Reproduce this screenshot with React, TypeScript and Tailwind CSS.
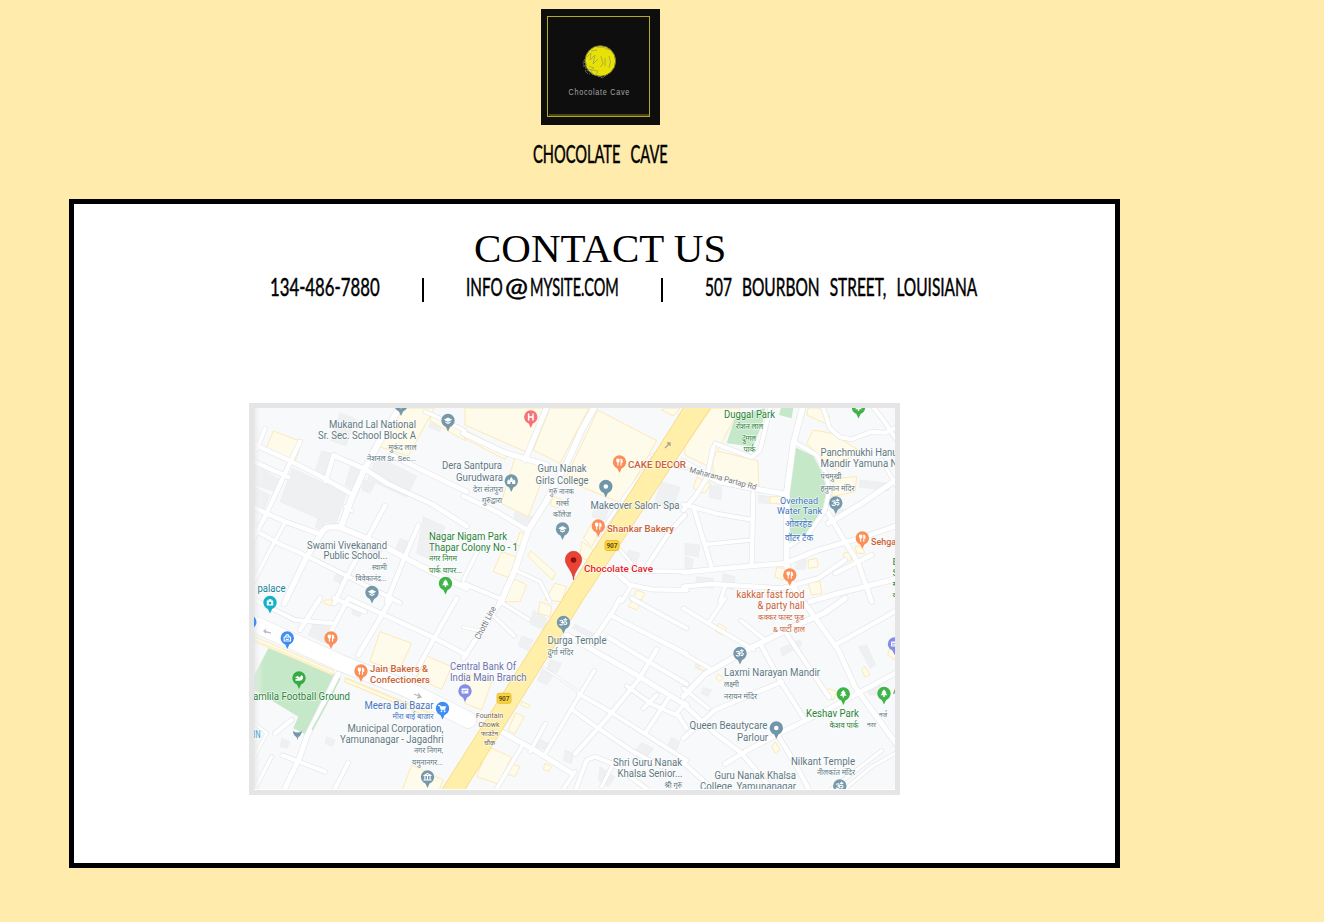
import React from "react";

type Road = [number, string];
type Tile = { x: number; y: number; yellow: string[]; grey: string[]; green: string[]; roads: Road[] };

// Each tile is drawn on a grid three times finer than the map itself.
const tiles: Tile[] = [
  {
    x: 245, y: 400,
    yellow: ["85,93 170,125 150,186 62,150", "455,24 568,24 490,168 403,140", "560,40 660,88 660,122 555,62"],
    grey: [
      "142,205 305,280 270,377 105,305", "230,152 268,162 240,240 208,222", "28,192 102,238 90,275 28,255",
      "285,38 330,55 303,138 258,122", "395,168 515,228 485,292 368,238", "320,192 352,208 328,275 300,255",
      "358,240 390,250 375,280 350,270", "535,350 600,380 560,480 515,460", "28,262 75,285 55,330 28,315",
      "280,508 310,520 295,555 265,540", "380,425 420,440 400,470 370,455", "465,415 490,425 470,465 450,450", "220,355 242,365 230,390 210,382",
      "560,58 592,72 585,96 552,82",
    ],
    green: [],
    roads: [
      [18, "M472 10L400 130L355 215L322 290L288 380"], [13, "M20 130L130 180L220 225L325 285"], [12, "M60 86L35 148"],
      [13, "M165 125L125 210L60 350L20 425"], [13, "M20 182L130 232"], [14, "M20 320L120 365L225 402"],
      [16, "M225 402L245 382L280 380L400 430L530 500L665 565"], [16, "M232 395L180 480L118 610"],
      [13, "M266 165L242 244"], [14, "M266 167L355 205L430 252L560 312L665 378"], [14, "M440 165L540 215L665 275"],
      [13, "M420 317L370 410L300 540L268 610"], [13, "M520 376L480 470L425 605"], [10, "M120 368L65 470L20 555"],
      [12, "M20 385L100 430L190 470L330 540L465 608"], [10, "M300 320L320 332"], [10, "M540 35L575 50L660 92"],
    ],
  },
  {
    x: 465, y: 400,
    yellow: [
      "0,24 235,24 188,158 0,75", "255,24 372,24 285,190 205,150", "398,30 575,122 470,310 300,240", "150,172 245,202 190,350 108,310",
      "197,453 272,518 262,540 188,468", "110,455 152,470 138,535 85,515", "0,90 130,158 120,178 0,116",
      "380,370 410,385 380,440 355,415", "265,290 290,298 278,325 255,315", "600,24 645,24 625,48 590,30",
      "165,395 188,405 170,440 152,435", "130,528 185,555 165,605 110,605", "270,550 305,560 290,605 240,600",
      "350,425 385,450 365,480 345,470", "515,570 540,580 525,605 500,605",
    ],
    grey: ["590,245 645,262 625,325 568,308", "150,335 202,350 185,387 145,365", "390,320 430,330 420,360 380,350", "490,450 525,460 515,490 480,480"],
    green: [],
    roads: [
      [16, "M248 15L180 180"], [15, "M-5 100L120 158L245 195"], [17, "M392 15L350 90L310 180L240 310L190 390L150 510L105 610"],
      [13, "M-5 288L95 335L190 392"], [10, "M150 510L225 545L255 605"], [10, "M40 450L-5 540"], [12, "M-5 550L115 600"],
      [13, "M420 495L460 525L495 555L560 568L665 570"], [11, "M480 512L665 515"], [8, "M445 425L500 490"],
      [13, "M660 345L610 400L545 500"], [9, "M575 160L480 290L400 405"], [11, "M500 555L470 605"],
      [6, "M560 165L610 195L665 205"],
    ],
  },
  {
    x: 685, y: 400,
    yellow: [
      "82,150 218,182 222,260 85,225", "80,24 165,24 72,200 0,165 0,140", "385,90 440,100 520,150 450,210 365,130",
      "255,290 290,290 290,312 255,310", "275,503 302,505 295,540 270,530", "370,480 395,475 400,500 370,505", "370,550 405,543 410,580 380,585",
      "35,232 78,250 60,280 25,265", "450,235 515,230 510,275 440,290", "510,440 530,436 540,460 515,460", "475,460 495,456 500,480 480,485",
      "370,24 400,24 435,50 420,70 365,45",
    ],
    grey: [
      "525,240 615,250 610,272 522,262", "75,255 110,260 108,300 72,292", "220,285 255,290 252,312 220,308",
      "35,530 85,535 85,565 30,560", "115,520 150,530 145,570 110,562", "0,430 45,435 40,470 0,465", "335,480 365,478 360,508 330,508",
      "445,325 485,330 480,350 450,350", "0,470 25,478 20,510 0,508",
    ],
    green: [
      "330,142 385,168 412,220 425,270 410,340 370,400 315,432 308,280", "150,52 240,24 235,60 205,140 125,130", "288,24 325,24 320,55 282,45",
    ],
    roads: [
      [17, "M355 15L325 130L305 280L305 495L320 550L350 605"], [15, "M-5 185L100 245L200 265L300 282"], [13, "M85 140L65 235L30 290L-5 330"],
      [12, "M90 130L200 172L225 150L258 15"], [12, "M-5 313L100 342L205 360"], [13, "M205 280L200 490"], [11, "M65 433L200 420"],
      [13, "M25 320L80 503"], [14, "M-5 517L150 502L300 490L400 450L540 410L640 375"], [13, "M-5 560L80 552L290 565L400 535L480 480"],
      [12, "M332 128L395 165L425 225L432 275L420 330L370 402L310 440"], [14, "M430 340L480 425L520 490L560 605"], [15, "M430 370L530 310L640 235"],
      [13, "M450 520L560 465"], [12, "M412 15L435 85L465 112L500 118L560 95L600 98L640 80"], [12, "M560 15L595 60L635 120"],
      [15, "M375 605L460 580L640 535"], [11, "M105 605L120 560"], [10, "M590 180L635 260"],
    ],
  },
  {
    x: 245, y: 600,
    yellow: [
      "405,95 500,130 460,215 375,185", "545,168 620,200 590,268 515,235", "500,495 595,540 580,575 470,575",
      "28,112 265,212 262,225 28,124", "300,232 560,340 552,352 298,245", "240,0 265,0 258,18 235,8",
    ],
    grey: ["210,60 270,90 240,130 190,105", "325,15 360,25 345,50 320,42", "245,410 270,420 262,440 240,430", "110,415 135,425 125,445 105,440"],
    green: ["70,145 268,222 180,402 145,385 160,350 28,270 28,225"],
    roads: [
      [48, "M-10 55L130 118L290 190L470 260L670 360"], [14, "M165 90L225 -5"], [14, "M340 165L440 -5"], [12, "M20 -5L150 60L260 70"],
      [13, "M245 120L310 -5"], [13, "M310 -5L430 50L560 110L665 165"], [13, "M510 220L570 110L635 -5"], [13, "M268 -5L360 35"],
      [15, "M280 222L185 410L165 470L115 575"], [12, "M112 466L240 515"], [10, "M80 470L28 570"], [12, "M310 488L265 575"],
      [8, "M28 370L65 400L28 470"], [13, "M90 400L140 360"],
    ],
  },
  {
    x: 465, y: 600,
    yellow: [
      "70,440 140,472 100,552 35,530", "152,338 177,350 150,402 130,390", "135,490 165,500 150,530 120,520", "0,220 80,245 50,330 0,310",
      "225,5 260,20 255,50 220,40", "505,-5 530,0 515,30 490,20", "170,305 195,315 190,325 168,316", "240,490 260,500 250,515 235,508",
    ],
    grey: [
      "255,178 290,190 275,220 245,208", "230,210 265,225 245,255 218,242", "170,108 205,120 190,152 160,138", "205,30 245,55 240,90 195,72",
      "530,428 565,445 545,475 508,455", "620,412 645,425 635,450 605,440", "220,415 250,430 240,450 212,440", "300,450 325,460 320,490 295,482",
      "330,72 400,108 392,122 322,85", "405,500 450,530 430,560 400,540",
    ],
    green: [],
    roads: [
      [13, "M115 -5L60 75L-5 175"], [10, "M75 38L148 108"], [10, "M105 5L190 58"], [8, "M-5 82L40 92"],
      [15, "M305 105L380 148L510 222L640 302L665 315"], [11, "M388 212L320 325L240 462"], [13, "M430 112L550 185L665 252"],
      [13, "M435 45L665 162"], [13, "M385 120L440 40L465 -5"], [12, "M500 -5L600 50L665 85"], [13, "M575 148L520 240L430 350L330 462"],
      [12, "M485 258L560 312L645 350"], [12, "M342 282L430 332L530 395L665 482"], [12, "M320 328L390 378L500 452L590 500"],
      [4, "M230 200L340 275"], [12, "M612 292L540 400"], [12, "M660 310L635 340L665 385"], [12, "M575 285L535 325"],
      [15, "M85 382L200 445L320 520"], [11, "M242 370L195 455"], [11, "M170 440L90 575"], [11, "M330 515L290 575"],
      [12, "M330 575L365 480L390 470L440 490L550 570"], [10, "M440 500L410 560"],
    ],
  },
  {
    x: 685, y: 600,
    yellow: ["100,70 125,85 112,105 90,92", "430,265 455,275 445,300 422,290", "540,200 555,225 540,232 530,208", "270,425 285,450 270,460 260,440", "45,190 68,200 60,212 42,205", "100,222 115,232 105,245 92,236", "615,140 640,150 630,178 608,165"],
    grey: ["285,145 345,120 350,135 292,168", "548,258 585,255 590,285 552,285", "520,140 545,135 572,195 555,205", "35,180 70,195 55,212 30,205", "55,262 80,270 68,290 48,280"],
    green: [],
    roads: [
      [11, "M-5 25L95 85L205 148"], [11, "M120 -5L70 70"], [16, "M-5 290L60 222L200 142L320 82L420 38L480 -5"], [11, "M168 62L240 120"],
      [13, "M225 130L290 250L355 352"], [13, "M300 95L360 185L432 292"], [15, "M345 -5L370 25L460 150L510 260L560 330L600 385L640 440"],
      [13, "M455 132L540 85L640 28"], [11, "M-5 160L80 208"], [13, "M-5 312L90 400L170 460L250 555"], [13, "M-5 415L90 330L290 245"],
      [14, "M120 492L180 455L260 412L440 322L640 215"], [13, "M282 412L330 490L375 575"], [12, "M-5 488L70 555"], [10, "M430 575L590 452"],
      [11, "M70 325L-5 265"], [9, "M470 575L560 500L640 455"],
    ],
  },
];

const slate = "#5f7883";
const green = "#2a8237";
const orange = "#cb6136";
const blue = "#4475c4";
const violet = "#6c72ad";

// text, left, baseline, width, colour, size, weight
type Label = [string, number, number, number, string, number, number?];
const labels: Label[] = [
  ["Mukand Lal National", 329, 427.5, 87, slate, 10],
  ["Sr. Sec. School Block A", 318, 438.5, 98, slate, 10],
  ["मुकंद लाल", 388.5, 449.5, 28, slate, 8],
  ["नेशनल Sr. Sec...", 367, 461, 49, slate, 8],
  ["Dera Santpura", 442, 469, 60, slate, 10],
  ["Gurudwara", 456, 481, 47, slate, 10],
  ["देरा संतपुरा", 473, 491.5, 30, slate, 8],
  ["गुरुद्वारा", 482, 503, 20, slate, 8],
  ["Guru Nanak", 537.5, 472, 49, slate, 10],
  ["Girls College", 535.5, 483.5, 53, slate, 10],
  ["गुरु नानक", 549, 494, 25, slate, 8],
  ["गर्ल्स", 556, 505.5, 13, slate, 8],
  ["कॉलेज", 553, 517, 18, slate, 8],
  ["CAKE DECOR", 628, 468, 58, orange, 9.6, 500],
  ["Makeover Salon- Spa", 590.5, 508.5, 89, slate, 10],
  ["Shankar Bakery", 607, 532, 67, orange, 9.8, 500],
  ["Chocolate Cave", 584, 571.5, 69, "#e51c2c", 9.8, 500],
  ["Nagar Nigam Park", 429, 539.5, 78, green, 10],
  ["Thapar Colony No - 1", 429, 550.5, 89, green, 10],
  ["नगर निगम", 429, 561, 28, green, 8],
  ["पार्क थापर...", 429, 572.5, 33, green, 8],
  ["Swami Vivekanand", 307, 548.5, 80, slate, 10],
  ["Public School...", 323.5, 559, 64, slate, 10],
  ["स्वामी", 372, 569.5, 15, slate, 8],
  ["विवेकानंद...", 355.5, 581, 31, slate, 8],
  ["palace", 257.5, 591.5, 28, "#17839b", 10],
  ["Duggal Park", 724, 418, 51, green, 10],
  ["रोशन लाल", 736, 428.5, 27, green, 8],
  ["दुग्गल", 742, 440.5, 14, green, 8],
  ["पार्क", 743.5, 452, 12, green, 8],
  ["Panchmukhi Hanu", 820.5, 456, 77, slate, 10],
  ["Mandir Yamuna N", 820.5, 467, 77, slate, 10],
  ["पंचमुखी", 820.5, 478.5, 21, slate, 8],
  ["हनुमान मंदिर", 820.5, 490.5, 34, slate, 8],
  ["Overhead", 780, 504, 38, blue, 9.2],
  ["Water Tank", 777, 514, 45, blue, 9.2],
  ["ओवरहेड", 785, 526.5, 27, blue, 9.5],
  ["वॉटर टैंक", 785, 541, 28, blue, 9.5],
  ["Sehga", 871, 544.5, 25, orange, 9.8, 500],
  ["kakkar fast food", 736.5, 597.5, 68, orange, 10],
  ["& party hall", 757.5, 609, 47, orange, 10],
  ["कक्कर फास्ट फूड", 758, 619.5, 46, orange, 8],
  ["& पार्टी हाल", 773, 631.5, 32, orange, 8],
  ["Jain Bakers &", 370, 671.5, 58, orange, 9.8, 500],
  ["Confectioners", 370, 682.5, 60, orange, 9.8, 500],
  ["amlila Football Ground", 253, 699.5, 97, green, 10],
  ["Meera Bai Bazar", 364.5, 708.5, 69, blue, 10],
  ["मीरा बाई बाजार", 392.5, 718.5, 41, blue, 8],
  ["Municipal Corporation,", 347.5, 731.5, 96, slate, 10],
  ["Yamunanagar - Jagadhri", 340, 743, 103.5, slate, 10],
  ["नगर निगम,", 414, 753, 29, slate, 8],
  ["यमुनानगर...", 412, 765, 31, slate, 8],
  ["IN", 253.5, 738, 7, "#35a0c5", 10],
  ["Central Bank Of", 450, 670, 66, violet, 10],
  ["India Main Branch", 450, 681, 76.5, violet, 10],
  ["Durga Temple", 547.5, 644, 59, slate, 10],
  ["दुर्गा मंदिर", 547.5, 655, 26, slate, 8],
  ["Fountain", 476, 717.5, 27, "#70675c", 7.5],
  ["Chowk", 478.5, 726.5, 21, "#70675c", 8],
  ["फाउंटेन", 481, 735.5, 17, "#70675c", 7],
  ["चौक", 484, 745, 11, "#70675c", 7],
  ["Shri Guru Nanak", 613, 766, 69, slate, 10],
  ["Khalsa Senior...", 617.5, 777, 65, slate, 10],
  ["श्री गुरु", 664.5, 787.5, 17.5, slate, 8],
  ["Laxmi Narayan Mandir", 724, 676, 96, slate, 10],
  ["लक्ष्मी", 724, 687, 15, slate, 8],
  ["नरायन मंदिर", 724, 698.5, 33, slate, 8],
  ["Queen Beautycare", 689.5, 729, 78, slate, 10],
  ["Parlour", 737, 740.5, 31, slate, 10],
  ["Keshav Park", 806, 716.5, 53, green, 10],
  ["केशव पार्क", 829.5, 727.5, 29, green, 8],
  ["Nilkant Temple", 791, 765, 64, slate, 10],
  ["नीलकांत मंदिर", 817, 775, 38, slate, 8],
  ["Guru Nanak Khalsa", 714.5, 778.5, 81.5, slate, 10],
  ["College, Yamunanagar", 700, 789.5, 96, slate, 10],
  ["नर्ज", 879, 717, 8, slate, 7],
  ["नरर", 867, 727, 9, slate, 7],
  ["A", 893, 694, 6, green, 9],
  ["B", 892.5, 565, 6, green, 9],
  ["S", 892.5, 576, 6, green, 9],
  ["ग", 892.5, 587, 6, green, 8],
  ["व", 892.5, 598, 6, green, 8],
];

type Kind = "school" | "hospital" | "food" | "dot" | "temple" | "om" | "tree" | "bag" | "cart" | "bank" | "card" | "camera" | "ball";
const pinColor: Record<Kind, string> = {
  school: "#7598ab", hospital: "#f47279", food: "#fa8f58", dot: "#6f96aa", temple: "#7598ab", om: "#7598ab", tree: "#3fb449",
  bag: "#3e8df5", cart: "#3e8df5", bank: "#7598ab", card: "#858ee6", camera: "#12b2c8", ball: "#35ab40",
};
// kind, centre of the head
const pins: [Kind, number, number][] = [
  ["school", 401, 405], ["school", 448, 420.5], ["hospital", 530.8, 417], ["food", 619.5, 462], ["dot", 605.8, 486.5], ["temple", 511.3, 481],
  ["food", 598.3, 526], ["school", 562.5, 529], ["school", 372, 592.5], ["tree", 445.5, 583.5], ["tree", 858.5, 407.5], ["om", 835.8, 503],
  ["food", 862.3, 538], ["food", 789.8, 575], ["camera", 270, 602.5], ["bag", 287.3, 638], ["bag", 249.8, 622], ["food", 331, 638],
  ["food", 361, 671], ["ball", 299, 678], ["cart", 442.5, 708.5], ["card", 465, 691], ["om", 563.5, 622.5], ["om", 740, 653.5],
  ["dot", 776.3, 728], ["tree", 843.3, 694], ["tree", 884, 693.5], ["card", 894.5, 644], ["bank", 427.5, 777], ["om", 839.8, 786],
];

function Glyph({ kind }: { kind: Kind }) {
  const line = { fill: "none", stroke: "#fff", strokeWidth: 1.1, strokeLinecap: "round" as const, strokeLinejoin: "round" as const };
  switch (kind) {
    case "school":
      return <path d="M-4.2-.8L0-3L4.2-.8L0 1.4ZM-2.5 1V2.3L0 3.5L2.5 2.3V1L0 2.3Z" fill="#fff" />;
    case "hospital":
      return <path d="M-2.2-3V3M2.2-3V3M-2.2 0H2.2" {...line} strokeWidth={1.5} />;
    case "food":
      return <path d="M-2.7-3V-1Q-2.7 0-1.6 0Q-.5 0-.5-1V-3M-1.6-3V3.2M1.5 3.2V-3Q2.9-2.4 2.8.3H1.5" {...line} />;
    case "dot":
      return <circle r="2.3" fill="#fff" />;
    case "temple":
      return <path d="M-4 3V0L-2.7-1.8L-1.5 0V-2L0-4L1.5-2V0L2.7-1.8L4 0V3H.8V1H-.8V3Z" fill="#fff" />;
    case "om":
      return <path d="M-3.5-1.8Q-.8-3-.8-1.2Q-.8 0-2.2 0Q-.2 0-.4 1.6Q-1 3.2-3.7 2M-.6.4Q1-1.2 2.5-.6Q4 .5 2.6 1.8Q1.8 2.2 1 1.5M.4-3Q1.8-1.8 3.2-3M1.8-4V-3.8" {...line} />;
    case "tree":
      return <path d="M0-4L2.5-1H1.6L3.3 1.8H.7V3.6H-.7V1.8H-3.3L-1.6-1H-2.5Z" fill="#fff" />;
    case "bag":
      return <path d="M-3.2-1H3.2V3H-3.2ZM-1.7-1Q-1.7-3.4 0-3.4Q1.7-3.4 1.7-1M-1.2 1Q0 2 1.2 1" {...line} />;
    case "cart":
      return <g><path d="M-4-3H-2.6L-1.2 1.2H2.5" {...line} /><path d="M-2.4-2.3H3.8L2.5.5H-1.5Z" fill="#fff" /><circle cx="-1" cy="2.9" r=".8" fill="#fff" /><circle cx="2.2" cy="2.9" r=".8" fill="#fff" /></g>;
    case "bank":
      return <path d="M-3.6-1.5L0-3.6L3.6-1.5ZM-2.6-.6V2M0-.6V2M2.6-.6V2M-3.6 3H3.6" {...line} />;
    case "card":
      return <g><rect x="-3.4" y="-2.6" width="6.8" height="5.2" rx=".6" fill="#fff" /><path d="M-2.4-.6H2.4M-2.4 1H0" stroke="#858ee6" strokeWidth=".8" /></g>;
    case "camera":
      return <g><path d="M-3.2-2H-1.5V-3.2H1.5V-2H3.2V3H-3.2Z" fill="#fff" /><circle cy=".6" r="1.4" fill="#12b2c8" /></g>;
    case "ball":
      return <path d="M-4-.8L-1.2-2L1-.2Q1-2.8 2.8-2.8Q4.4-2.4 4 .5Q3.2 3 0 2.8H-3.5V1H-1Z" fill="#fff" />;
  }
}

function CityMap() {
  return (
    <svg className="block h-[382px] w-[641px]" viewBox="254 408 641 382" fontFamily="Roboto, 'Noto Sans', sans-serif">
      <defs>
        <linearGradient id="edge" x1="0" x2="1">
          <stop offset="0" stopColor="#dfe0e1" stopOpacity=".7" />
          <stop offset="1" stopColor="#fff" stopOpacity="0" />
        </linearGradient>
      </defs>
      <rect x="254" y="408" width="641" height="382" fill="#f8f9fa" />
      {tiles.map((t) => (
        <g key={`${t.x}-${t.y}`} transform={`translate(${t.x} ${t.y}) scale(.33333)`}>
          {t.grey.map((p) => <polygon key={p} points={p} fill="#eff0f2" stroke="#eaebed" strokeWidth="1.5" />)}
          {t.green.map((p) => <polygon key={p} points={p} fill="#c5e8c8" />)}
          {t.yellow.map((p) => <polygon key={p} points={p} fill="#fffbeb" stroke="#fbeab5" strokeWidth="3" />)}
        </g>
      ))}
      {["#e4e6e9", "#ffffff"].map((color, pass) => (
        <g key={color} fill="none" stroke={color} strokeLinecap="round" strokeLinejoin="round">
          {tiles.map((t) => (
            <g key={`${t.x}-${t.y}`} transform={`translate(${t.x} ${t.y}) scale(.33333)`}>
              {t.roads.map(([w, d]) => <path key={d} d={d} strokeWidth={pass ? w : w + 4} />)}
            </g>
          ))}
        </g>
      ))}
      <path d="M340 678L333 692L312 730" fill="none" stroke="#c5e8c8" strokeWidth="1.6" />
      <path d="M254 638L333 672M345 680L431 716" fill="none" stroke="#fbeab5" strokeWidth="3.6" />
      <path d="M254 638L333 672M345 680L431 716" fill="none" stroke="#fffbeb" strokeWidth="2.2" />
      <path d="M684 407L562 600L441 791H464L583 600L711 407Z" fill="#ffefa9" stroke="#f7dc8a" strokeWidth="1" />
      <path d="M665 448L670 443M667 443H670V446" fill="none" stroke="#aaa68e" strokeWidth="1.3" />
      <path d="M271 633L264 631M266 629.5L264 631L266 633M414 694L421 697M418 693.5L421 697L417 698" fill="none" stroke="#b6bac2" strokeWidth="1.3" />
      <rect x="254" y="408" width="9" height="382" fill="url(#edge)" />
      <path d="M293 731Q297.500 734 302 731Q301 736 298.300 737L297.500 740L296.500 737Q293 735 293 731Z" fill="#7598ab" />
      {[[612, 545.5], [504, 698.3]].map(([x, y]) => (
        <g key={x}>
          <rect x={x - 7} y={y - 5} width="14" height="10" rx="2" fill="#fbd33b" stroke="#e2b92b" strokeWidth=".8" />
          <text x={x} y={y + 2.4} textAnchor="middle" fontSize="6.5" fontWeight="700" fill="#5d4e20">907</text>
        </g>
      ))}
      {pins.map(([kind, x, y]) => (
        <g key={`${x}-${y}`} transform={`translate(${x} ${y})`}>
          <path d="M0 11L-2.1 6.4C-4.7 5.4-6.7 3-6.7 0A6.7 6.7 0 1 1 6.7 0C6.7 3 4.7 5.4 2.1 6.4Z" fill={pinColor[kind]} />
          <Glyph kind={kind} />
        </g>
      ))}
      <path d="M573.5 580C573 570.5 565.3 566.5 565.3 559.5A8.2 8.2 0 1 1 581.7 559.5C581.7 566.5 574 570.5 573.5 580Z" fill="#ea4335" stroke="#c5362b" strokeWidth=".6" />
      <circle cx="573.5" cy="560" r="2.8" fill="#8c1012" />
      <g stroke="#fff" strokeOpacity=".7" strokeWidth="1.4" paintOrder="stroke" strokeLinejoin="round">
        {labels.map(([s, x, y, w, color, size, weight]) => (
          <text key={`${s}-${y}`} x={x} y={y} fontSize={size} fontWeight={weight ?? 400} fill={color} textLength={w} lengthAdjust="spacingAndGlyphs">{s}</text>
        ))}
        <text transform="translate(689 472) rotate(15)" fontSize="8" fill="#74787c" textLength="69" lengthAdjust="spacingAndGlyphs">Maharana Partap Rd</text>
        <text transform="translate(479.500 640) rotate(-62)" fontSize="8.500" fill="#74787c" textLength="36" lengthAdjust="spacingAndGlyphs">Chotti Line</text>
      </g>
      <rect x="254" y="789" width="641" height="1" fill="#fff" />
    </svg>
  );
}

function Logo() {
  return (
    <svg className="block h-[116px] w-[119px]" viewBox="0 0 119 116">
      <rect width="119" height="116" fill="#0e0e0e" />
      <rect x="6.500" y="7.500" width="102" height="100" fill="none" stroke="#b3aa25" />
      <path d="M8 106H108" stroke="#4b4710" strokeWidth="2" />
      <circle cx="59.300" cy="52" r="15.300" fill="#e8e106" stroke="#77742f" strokeWidth="1" />
      <g fill="none" stroke="#a29f55" strokeWidth=".8">
        <path d="M46 48L50 44L49 51L54 46L52 55L57 50M48 57L53 59L50 61L57 62L55 66M56 38Q63 37 68 41M60 47L62 55L59 58M68 47Q71 53 68 59M64 49V57M50 42L56 41" />
        <path d="M44 50Q40 55 45 59Q43 64 49 65M43 53L46 55L42 58M46 62L49 60L52 66M57 67L62 69L65 66" stroke="#858585" strokeDasharray="2 1" />
      </g>
      <text transform="translate(27.500 85.500) scale(.8 1)" fontFamily="'Liberation Sans', sans-serif" fontSize="9" fill="#a5a5a5" textLength="76" lengthAdjust="spacing">Chocolate Cave</text>
    </svg>
  );
}

function Condensed({ children, box, scale }: { children: React.ReactNode; box: string; scale: string }) {
  return (
    <span className={`block ${box}`}>
      <span className={`inline-block origin-left font-[Lato,sans-serif] text-[25px] leading-[30px] whitespace-pre text-black [-webkit-text-stroke:0.5px_black] ${scale}`}>{children}</span>
    </span>
  );
}

export default function App() {
  return (
    <div className="h-[922px] w-full overflow-hidden bg-[#ffebac] pt-[9px]">
      <header className="flex w-[1201px] flex-col items-center">
        <Logo />
        <div className="mt-[13px]">
          <Condensed box="w-[135px]" scale="scale-x-[0.585] [word-spacing:11px]">CHOCOLATE CAVE</Condensed>
        </div>
      </header>
      <main className="mt-[30px] ml-[69px] flex h-[669px] w-[1051px] flex-col border-[5px] border-black bg-white pt-[21px]">
        <h1 className="pl-[400px] pt-px font-['Liberation_Serif',serif] text-[41px] leading-[45px] text-black">CONTACT US</h1>
        <div className="flex h-[30px] pl-[196px]">
          <Condensed box="w-[152px]" scale="scale-x-[0.67]">134-486-7880</Condensed>
          <span className="mt-[7px] h-6 w-[2px] bg-black" />
          <Condensed box="ml-[42px] w-[39px]" scale="scale-x-[0.61]">INFO</Condensed>
          <Condensed box="w-[25px]" scale="scale-x-[1.1]">@</Condensed>
          <Condensed box="w-[131px]" scale="scale-x-[0.58]">MYSITE.COM</Condensed>
          <span className="mt-[7px] h-6 w-[2px] bg-black" />
          <Condensed box="ml-[42px] w-[272px]" scale="scale-x-[0.618] [word-spacing:10px]">507 BOURBON STREET, LOUISIANA</Condensed>
        </div>
        <div className="mt-[102px] ml-[175px] h-[392px] w-[651px] border-[5px] border-[#e5e5e5]">
          <CityMap />
        </div>
      </main>
    </div>
  );
}
